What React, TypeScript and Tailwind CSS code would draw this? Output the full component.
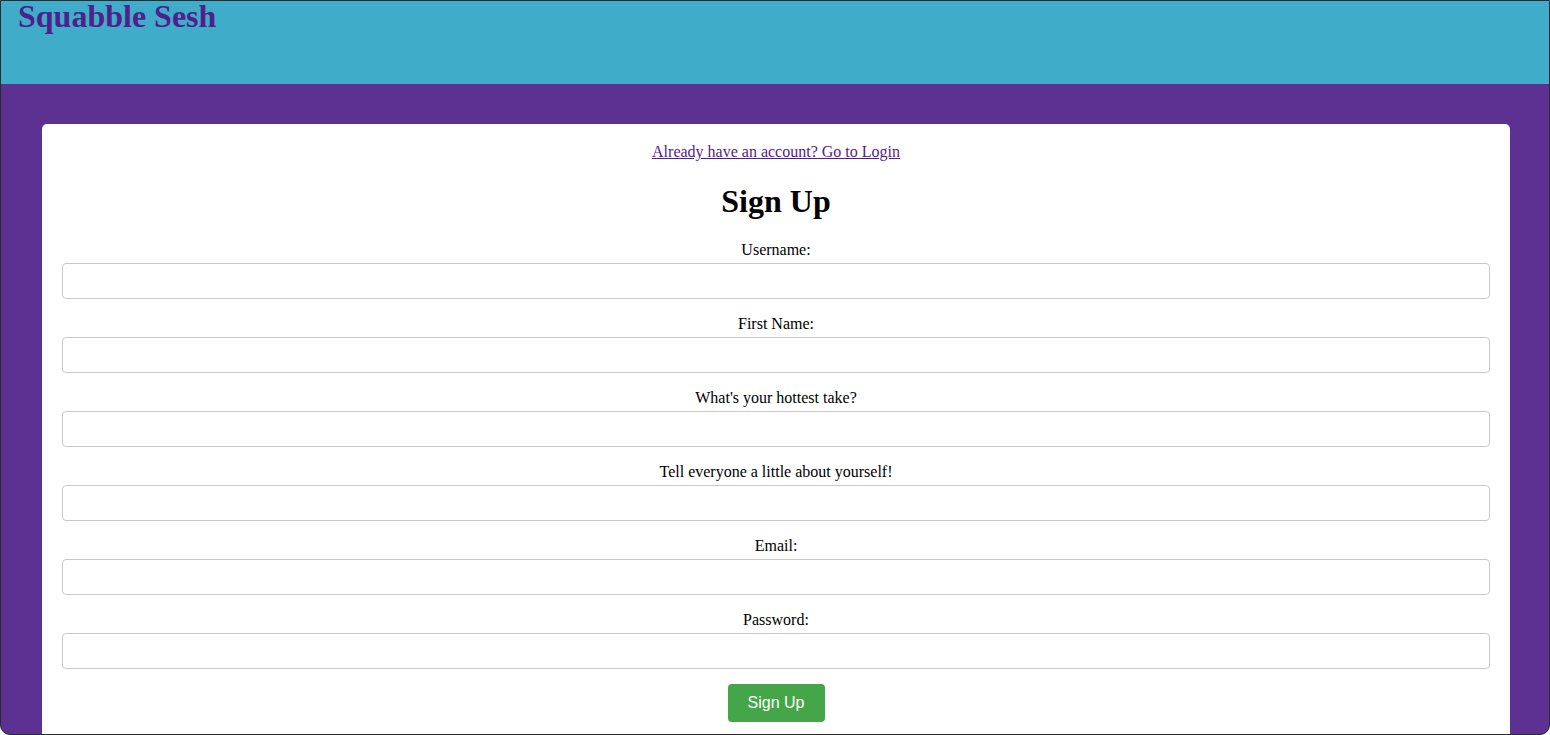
const fields = [
  'Username:',
  'First Name:',
  "What's your hottest take?",
  'Tell everyone a little about yourself!',
  'Email:',
  'Password:',
];

export default function App() {
  return (
    <div className="h-[735px] overflow-hidden bg-white">
      <div className="flex h-[735px] flex-col overflow-hidden rounded-b-[10px] border border-[#2b2b2b] bg-[#5c3191] font-['Liberation_Serif',serif] text-black">
        {/* Header */}
        <header className="h-[83px] shrink-0 bg-[#3fadc9] pl-[17px]">
          <h1 className="m-0 text-[32px] leading-[31px] font-bold text-[#4f1f8a]">Squabble Sesh</h1>
        </header>

        {/* Main */}
        <main className="flex-1 pt-10 pl-[41px] pr-[39px]">
          <div className="rounded-[5px] bg-white px-5 pt-[19px] pb-5 text-center text-[16px] leading-[18px]">
            <div>
              <a href="#" className="text-[#551a8b] underline">
                Already have an account? Go to Login
              </a>
            </div>
            <h2 className="mt-[22px] mb-[21px] text-[32px] leading-[37px] font-bold">Sign Up</h2>
            <form className="flex flex-col items-center">
              {fields.map((label) => (
                <div key={label} className="w-full">
                  <label className="mb-[4px] block leading-[18px]">{label}</label>
                  <input
                    type={label === 'Password:' ? 'password' : 'text'}
                    className="mb-[16px] block h-[36px] w-full rounded-[4px] border border-[#c8c8c8] px-2"
                  />
                </div>
              ))}
              <button
                type="button"
                className="-mt-[1px] h-[38px] w-[97px] rounded-[4px] bg-[#45a549] font-['Liberation_Sans',Arial,sans-serif] text-[16px] text-white"
              >
                Sign Up
              </button>
            </form>
          </div>
        </main>
      </div>
    </div>
  );
}
